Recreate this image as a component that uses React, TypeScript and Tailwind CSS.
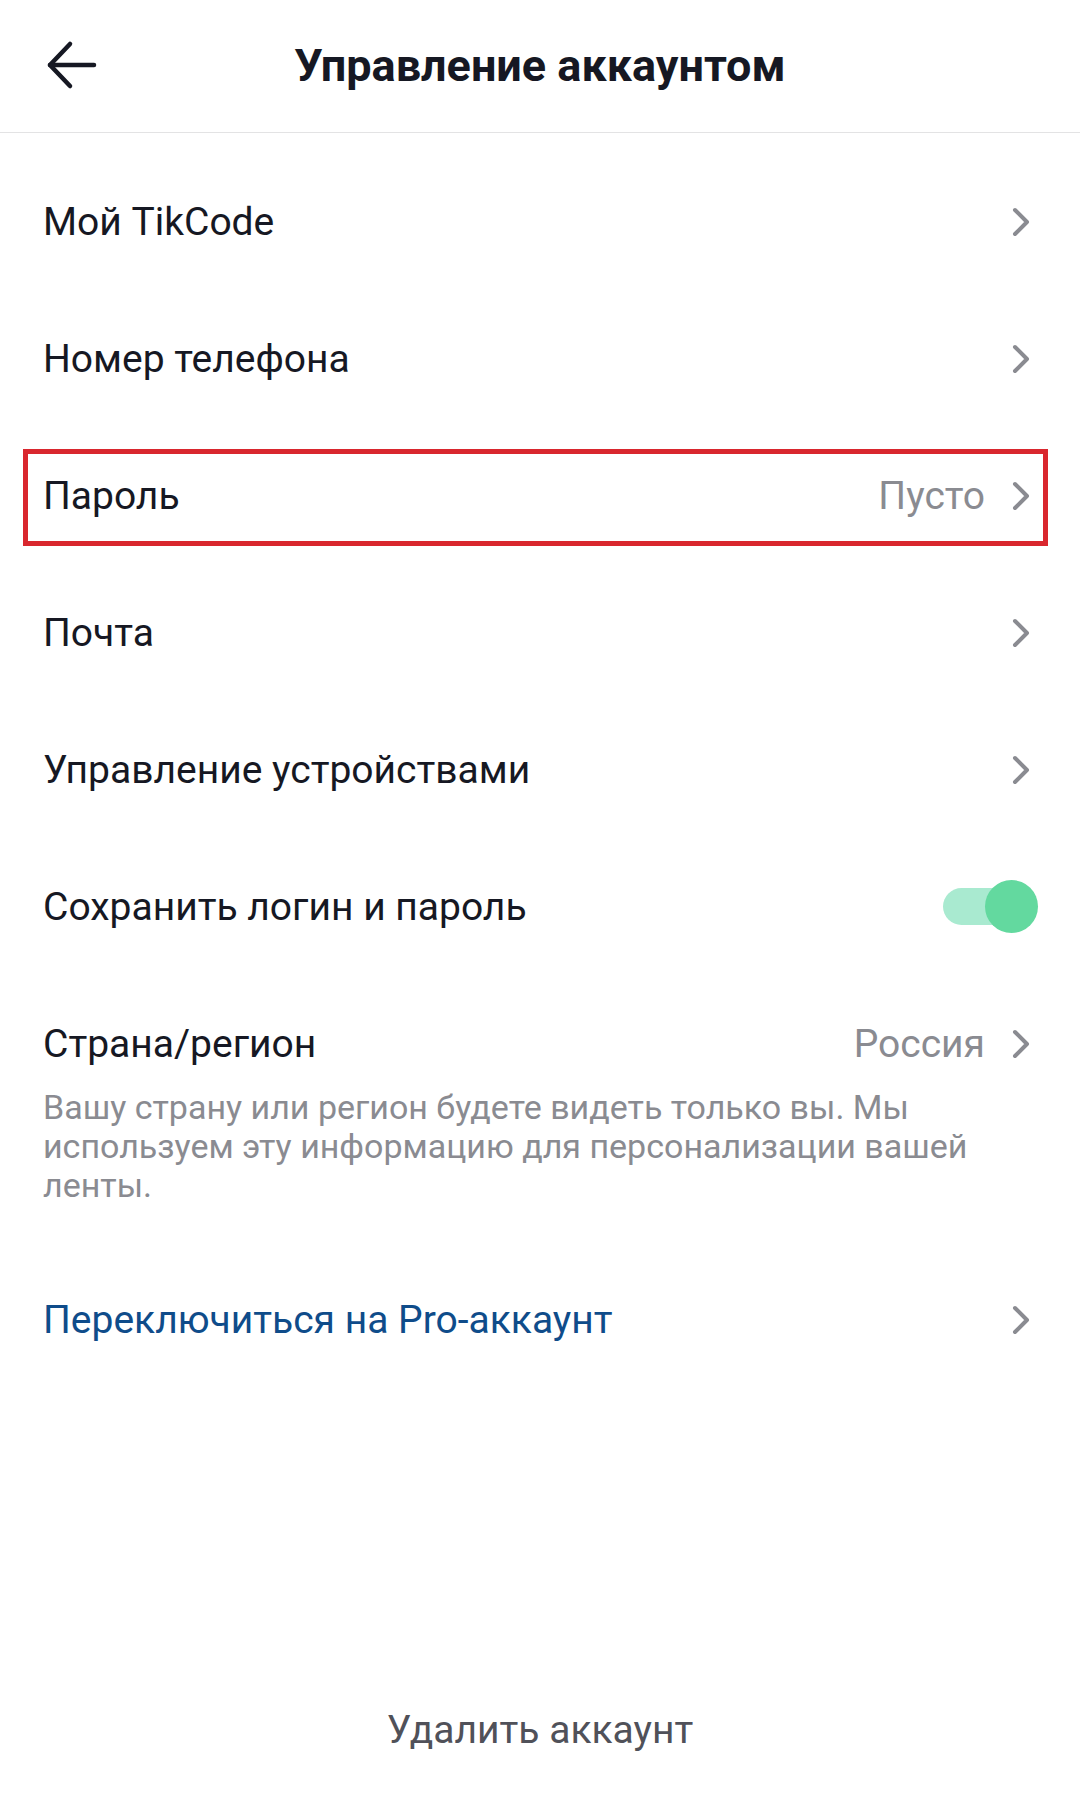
import React from "react";

const Chevron = () => (
  <svg width="18" height="30" viewBox="0 0 18 30" fill="none" className="shrink-0">
    <polyline points="3,3 15,15 3,27" stroke="#8a8b91" strokeWidth="4" strokeLinecap="round" strokeLinejoin="round" />
  </svg>
);

const Row = ({ label, value, children, color = "text-[#161823]" }: { label: string; value?: string; children?: React.ReactNode; color?: string }) => (
  <div className="relative flex h-[137px] items-center pl-[43px] pr-[50px]">
    <span className={`text-[39px] leading-[48px] ${color}`}>{label}</span>
    <div className="ml-auto flex items-center gap-[27px]">
      {value && <span className="text-[39px] leading-[48px] text-[#8a8b91]">{value}</span>}
      {children ?? <Chevron />}
    </div>
  </div>
);

export default function App() {
  return (
    <div className="flex h-[1812px] w-[1080px] flex-col bg-white" style={{ fontFamily: "Roboto, 'Noto Sans', sans-serif" }}>
      <header className="relative flex h-[133px] shrink-0 items-center justify-center border-b border-[#e3e3e4]">
        <svg width="52" height="50" viewBox="0 0 52 50" fill="none" className="absolute left-[46px] top-[40px]">
          <line x1="4" y1="25" x2="48" y2="25" stroke="#161823" strokeWidth="4.5" strokeLinecap="round" />
          <polyline points="24,4 4,25 24,46" stroke="#161823" strokeWidth="4.5" strokeLinecap="round" strokeLinejoin="round" />
        </svg>
        <h1 className="text-[45px] font-bold leading-[52px] text-[#161823]">Управление аккаунтом</h1>
      </header>

      <div className="pt-[20px]">
        <Row label="Мой TikCode" />
        <Row label="Номер телефона" />
        <div className="relative">
          <Row label="Пароль" value="Пусто" />
          <div className="pointer-events-none absolute bottom-[18px] left-[23px] right-[32px] top-[22px] border-[5px] border-[#d9272e]" />
        </div>
        <Row label="Почта" />
        <Row label="Управление устройствами" />
        <Row label="Сохранить логин и пароль">
          <div className="relative -mr-[8px] h-[53px] w-[95px]">
            <div className="absolute left-0 top-[8px] h-[37px] w-[82px] rounded-full bg-[#a9ead0]" />
            <div className="absolute right-0 top-0 h-[53px] w-[53px] rounded-full bg-[#63d99f]" />
          </div>
        </Row>

        <div className="pb-[46px] pl-[43px] pr-[50px] pt-[45px]">
          <div className="flex h-[48px] items-center">
            <span className="text-[39px] leading-[48px] text-[#161823]">Страна/регион</span>
            <div className="ml-auto flex items-center gap-[27px]">
              <span className="text-[39px] leading-[48px] text-[#8a8b91]">Россия</span>
              <Chevron />
            </div>
          </div>
          <p className="mt-[20px] text-[34px] leading-[39px] text-[#8a8b91]">
            Вашу страну или регион будете видеть только вы. Мы используем эту информацию для персонализации вашей ленты.
          </p>
        </div>

        <Row label="Переключиться на Pro-аккаунт" color="text-[#0f4c8a]" />
      </div>

      <div className="mt-auto flex justify-center pb-[58px]">
        <span className="text-[39px] leading-[48px] text-[#505159]">Удалить аккаунт</span>
      </div>
    </div>
  );
}
